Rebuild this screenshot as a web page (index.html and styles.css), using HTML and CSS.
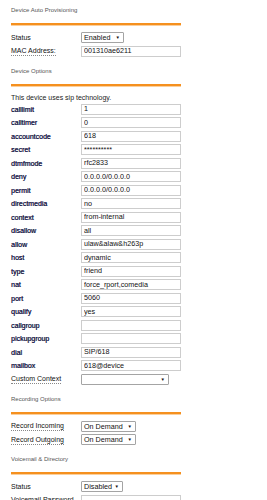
FILE: index.html
```html
<!DOCTYPE html>
<html lang="en">
  <head>
    <meta charset="UTF-8" />
    <meta name="viewport" content="width=device-width, initial-scale=1.0" />
    <title>Device</title>
    <link rel="stylesheet" href="styles.css">
  </head>
  <body>
    <div class="page">
      <!-- auto provisioning -->
      <div class="section-title first">Device Auto Provisioning</div>
      <div class="form">
        <span class="lbl">Status</span>
        <div class="sel w-enabled"><span>Enabled</span><span class="arrow">▼</span></div>
        <span class="lbl tip">MAC Address:</span>
        <input type="text" value="001310ae6211" />
      </div>

      <!-- device options -->
      <div class="section-title">Device Options</div>
      <p class="note">This device uses sip technology.</p>
      <div class="form">
        <span class="lbl sip">calllimit</span><input type="text" value="1" />
        <span class="lbl sip">calltimer</span><input type="text" value="0" />
        <span class="lbl sip">accountcode</span><input type="text" value="618" />
        <span class="lbl sip">secret</span><input type="text" value="**********" />
        <span class="lbl sip">dtmfmode</span><input type="text" value="rfc2833" />
        <span class="lbl sip">deny</span><input type="text" value="0.0.0.0/0.0.0.0" />
        <span class="lbl sip">permit</span><input type="text" value="0.0.0.0/0.0.0.0" />
        <span class="lbl sip">directmedia</span><input type="text" value="no" />
        <span class="lbl sip">context</span><input type="text" value="from-internal" />
        <span class="lbl sip">disallow</span><input type="text" value="all" />
        <span class="lbl sip">allow</span><input type="text" value="ulaw&amp;alaw&amp;h263p" />
        <span class="lbl sip">host</span><input type="text" value="dynamic" />
        <span class="lbl sip">type</span><input type="text" value="friend" />
        <span class="lbl sip">nat</span><input type="text" value="force_rport,comedia" />
        <span class="lbl sip">port</span><input type="text" value="5060" />
        <span class="lbl sip">qualify</span><input type="text" value="yes" />
        <span class="lbl sip">callgroup</span><input type="text" value="" />
        <span class="lbl sip">pickupgroup</span><input type="text" value="" />
        <span class="lbl sip">dial</span><input type="text" value="SIP/618" />
        <span class="lbl sip">mailbox</span><input type="text" value="618@device" />
        <span class="lbl tip">Custom Context</span>
        <div class="sel w-context"><span></span><span class="arrow">▼</span></div>
      </div>

      <!-- recording -->
      <div class="section-title">Recording Options</div>
      <div class="form">
        <span class="lbl tip">Record Incoming</span>
        <div class="sel w-demand"><span>On Demand</span><span class="arrow">▼</span></div>
        <span class="lbl tip">Record Outgoing</span>
        <div class="sel w-demand"><span>On Demand</span><span class="arrow">▼</span></div>
      </div>

      <!-- voicemail -->
      <div class="section-title">Voicemail &amp; Directory</div>
      <div class="form">
        <span class="lbl">Status</span>
        <div class="sel w-disabled"><span>Disabled</span><span class="arrow">▼</span></div>
        <span class="lbl tip">Voicemail Password</span>
        <input type="text" value="" />
      </div>
    </div>
  </body>
</html>
```

FILE: styles.css
```css
:root {
  --orange: #f5901f;
  --orange-light: #fbcf9c;
  --input-border: #cdcdcd;
  --select-border: #a4a4a4;
}

body {
  margin: 0;
  padding: 0;
  background-color: #fff;
  color: #111;
  font-family: "Liberation Sans", Arial, sans-serif;
  font-size: 7px;
}

.page {
  width: 170px;
  padding: 6px 0 0 11px;
}

/* titulos de seccion */
.section-title {
  margin-top: 10px;
  padding-bottom: 9px;
  margin-bottom: 7px;
  font-size: 6px;
  line-height: 8px;
  color: #555;
  border-bottom: 2px solid var(--orange);
  box-shadow: 0 1px 0 var(--orange-light);
}

.section-title.first {
  margin-top: 0;
}

.note {
  margin: 0 0 2px;
  line-height: 9px;
  color: #222;
}

.form {
  display: grid;
  grid-template-columns: 70px 100px;
  grid-auto-rows: 11px;
  row-gap: 2.5px;
  align-items: center;
}

.lbl {
  line-height: 11px;
  white-space: nowrap;
}

.lbl.tip {
  justify-self: start;
  line-height: 9px;
  border-bottom: 1px dotted #888;
}

.lbl.sip {
  color: #1c1c4a;
  font-size: 7px;
  text-shadow: 0.3px 0 0 #1c1c4a;
}

input {
  box-sizing: border-box;
  width: 100px;
  height: 11px;
  margin: 0;
  padding: 0 2px 1px;
  border: 1px solid var(--input-border);
  font-family: "Liberation Sans", Arial, sans-serif;
  font-size: 7.2px;
  line-height: 8px;
  color: #111;
  outline: none;
}

/* selects dibujados */
.sel {
  box-sizing: border-box;
  height: 11px;
  justify-self: start;
  display: flex;
  justify-content: space-between;
  align-items: center;
  padding: 0 3px 0 2px;
  border: 1px solid var(--select-border);
  border-radius: 1px;
  background-color: #fff;
  font-size: 7.2px;
  color: #111;
}

.arrow {
  font-size: 4.5px;
}

.w-enabled {
  width: 43px;
}

.w-context {
  width: 88px;
}

.w-demand {
  width: 55px;
}

.w-disabled {
  width: 42px;
}
```
